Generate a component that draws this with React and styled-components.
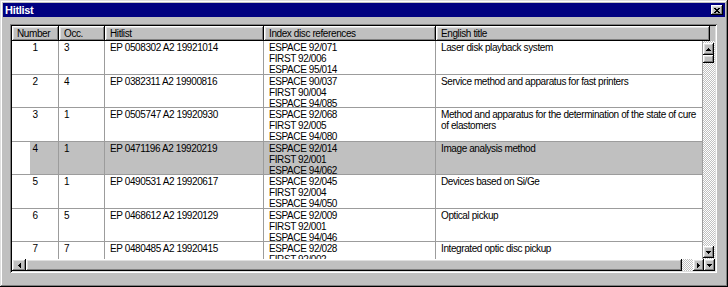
import React from "react";
import styled, { createGlobalStyle, css } from "styled-components";

const Global = createGlobalStyle`
  html, body { margin: 0; padding: 0; background: #c0c0c0; }
  body { font-family: "Liberation Sans", Arial, sans-serif; }
`;

const raised = css`
  background: #c0c0c0;
  box-shadow: inset -1px -1px #000, inset 1px 1px #fff, inset -2px -2px #808080, inset 2px 2px #dfdfdf;
`;

const dither = css`
  background: repeating-conic-gradient(#c0c0c0 0 25%, #fff 0 50%) 0 0 / 2px 2px;
`;

const Window = styled.div`
  width: 728px;
  height: 287px;
  box-sizing: border-box;
  padding: 3px;
  background: #c0c0c0;
  box-shadow: inset -1px -1px #000, inset 1px 1px #dfdfdf, inset -2px -2px #808080, inset 2px 2px #fff;
  display: flex;
  flex-direction: column;
  font-family: "Liberation Sans", Arial, sans-serif;
`;

const TitleBar = styled.div`
  height: 14px;
  background: #000080;
  display: flex;
  align-items: center;
  justify-content: space-between;
  padding: 0 2px;
  flex-shrink: 0;
`;

const Title = styled.span`
  color: #fff;
  font-weight: bold;
  font-size: 11px;
  line-height: 14px;
  letter-spacing: -0.3px;
`;

const CloseBtn = styled.div`
  ${raised};
  width: 12px;
  height: 10px;
  display: flex;
  align-items: center;
  justify-content: center;
`;

const Body = styled.div`
  flex: 1;
  display: flex;
  padding: 7px 8px 11px 7px;
  min-height: 0;
`;

const Frame = styled.div`
  flex: 1;
  display: flex;
  flex-direction: column;
  padding: 2px;
  background: #fff;
  box-shadow: inset 1px 1px #808080, inset -1px -1px #fff, inset 2px 2px #000, inset -2px -2px #dfdfdf;
  min-height: 0;
`;

const Header = styled.div`
  display: flex;
  height: 15px;
  flex-shrink: 0;
  background: #c0c0c0;
`;

const HeaderCell = styled.div`
  ${raised};
  width: ${(p) => p.$w}px;
  box-sizing: border-box;
  padding-left: 5px;
  font-size: 10px;
  line-height: 15px;
  letter-spacing: -0.4px;
  white-space: nowrap;
  color: #000;
`;

const HeaderFill = styled.div`
  flex: 1;
  background: #c0c0c0;
`;

const Middle = styled.div`
  flex: 1;
  display: flex;
  min-height: 0;
`;

const Rows = styled.div`
  width: 691px;
  overflow: hidden;
  background: #fff;
  display: flex;
  flex-direction: column;
`;

const Row = styled.div`
  display: flex;
  height: 33.5px;
  flex-shrink: 0;
  box-sizing: border-box;
  border-bottom: 1px solid #9c9c9c;
  background: ${(p) => (p.$selected ? "#c0c0c0" : "#fff")};
`;

const Cell = styled.div`
  width: ${(p) => p.$w}px;
  box-sizing: border-box;
  border-right: 1px solid #9c9c9c;
  padding: 1px 0 0 ${(p) => (p.$center ? 0 : 5)}px;
  text-align: ${(p) => (p.$center ? "center" : "left")};
  font-size: 10px;
  line-height: 11px;
  letter-spacing: -0.4px;
  white-space: nowrap;
  overflow: hidden;
  color: #000;
  ${(p) =>
    p.$cut &&
    css`
      background: linear-gradient(to right, #fff 18px, transparent 18px);
    `}
`;

const VScroll = styled.div`
  width: 12px;
  display: flex;
  flex-direction: column;
  ${dither};
  padding-top: 2px;
  padding-bottom: 1px;
  box-sizing: border-box;
`;

const ArrowBtn = styled.div`
  ${raised};
  width: ${(p) => (p.$w ? `${p.$w}px` : "11px")};
  height: ${(p) => (p.$h ? `${p.$h}px` : "12px")};
  flex-shrink: 0;
  display: flex;
  align-items: center;
  justify-content: center;
`;

const VThumb = styled.div`
  ${raised};
  width: 11px;
  height: 8px;
  flex-shrink: 0;
`;

const VTrack = styled.div`
  flex: 1;
`;

const HScroll = styled.div`
  display: flex;
  height: 12px;
  flex-shrink: 0;
  background: #c0c0c0;
`;

const HThumb = styled.div`
  ${raised};
  flex: 1;
`;

const HTrack = styled.div`
  width: 11px;
  ${dither};
`;

const Arrow = ({ dir }) => {
  const paths = {
    up: "M2 0h1v1H2z M1 1h3v1H1z M0 2h5v1H0z",
    down: "M0 0h5v1H0z M1 1h3v1H1z M2 2h1v1H2z",
    left: "M2 0h1v5H2z M1 1h1v3H1z M0 2h1v1H0z",
    right: "M0 0h1v5H0z M1 1h1v3H1z M2 2h1v1H2z",
  };
  const vertical = dir === "up" || dir === "down";
  const w = vertical ? 5 : 3;
  const h = vertical ? 3 : 5;
  return (
    <svg width={w} height={h} viewBox={`0 0 ${w} ${h}`} shapeRendering="crispEdges">
      <path d={paths[dir]} fill="#000" />
    </svg>
  );
};

const CloseGlyph = () => (
  <svg width="6" height="5" viewBox="0 0 6 5" shapeRendering="crispEdges">
    <path d="M0 0h2v1H0z M4 0h2v1H4z M1 1h4v1H1z M2 2h2v1H2z M1 3h4v1H1z M0 4h2v1H0z M4 4h2v1H4z" fill="#000" />
  </svg>
);

const columns = [
  { key: "num", label: "Number", w: 47, hw: 47 },
  { key: "occ", label: "Occ.", w: 46, hw: 46 },
  { key: "hit", label: "Hitlist", w: 159, hw: 159 },
  { key: "idx", label: "Index disc references", w: 172, hw: 172 },
  { key: "title", label: "English title", w: 267, hw: 274 },
];

const data = [
  { num: "1", occ: "3", hit: "EP 0508302 A2 19921014", idx: ["ESPACE 92/071", "FIRST 92/006", "ESPACE 95/014"], title: ["Laser disk playback system"] },
  { num: "2", occ: "4", hit: "EP 0382311 A2 19900816", idx: ["ESPACE 90/037", "FIRST 90/004", "ESPACE 94/085"], title: ["Service method and apparatus for fast printers"] },
  { num: "3", occ: "1", hit: "EP 0505747 A2 19920930", idx: ["ESPACE 92/068", "FIRST 92/005", "ESPACE 94/080"], title: ["Method and apparatus for the determination of the state of cure", "of elastomers"] },
  { num: "4", occ: "1", hit: "EP 0471196 A2 19920219", idx: ["ESPACE 92/014", "FIRST 92/001", "ESPACE 94/062"], title: ["Image analysis method"], selected: true },
  { num: "5", occ: "1", hit: "EP 0490531 A2 19920617", idx: ["ESPACE 92/045", "FIRST 92/004", "ESPACE 94/050"], title: ["Devices based on Si/Ge"] },
  { num: "6", occ: "5", hit: "EP 0468612 A2 19920129", idx: ["ESPACE 92/009", "FIRST 92/001", "ESPACE 94/046"], title: ["Optical pickup"] },
  { num: "7", occ: "7", hit: "EP 0480485 A2 19920415", idx: ["ESPACE 92/028", "FIRST 92/002", "ESPACE 94/051"], title: ["Integrated optic disc pickup"] },
];

const Lines = ({ lines }) =>
  lines.map((l, i) => <div key={i}>{l}</div>);

export default function App() {
  return (
    <>
      <Global />
      <Window>
        <TitleBar>
          <Title>Hitlist</Title>
          <CloseBtn>
            <CloseGlyph />
          </CloseBtn>
        </TitleBar>
        <Body>
          <Frame>
            <Header>
              {columns.map((c) => (
                <HeaderCell key={c.key} $w={c.hw}>
                  {c.label}
                </HeaderCell>
              ))}
              <HeaderFill />
            </Header>
            <Middle>
              <Rows>
                {data.map((r) => (
                  <Row key={r.num} $selected={r.selected}>
                    <Cell $w={47} $center $cut={r.selected}>{r.num}</Cell>
                    <Cell $w={46}>{r.occ}</Cell>
                    <Cell $w={159}>{r.hit}</Cell>
                    <Cell $w={172}>
                      <Lines lines={r.idx} />
                    </Cell>
                    <Cell $w={267}>
                      <Lines lines={r.title} />
                    </Cell>
                  </Row>
                ))}
              </Rows>
              <VScroll>
                <ArrowBtn $w={11}>
                  <Arrow dir="up" />
                </ArrowBtn>
                <VThumb />
                <VTrack />
                <ArrowBtn $w={11}>
                  <Arrow dir="down" />
                </ArrowBtn>
              </VScroll>
            </Middle>
            <HScroll>
              <ArrowBtn $w={14}>
                <Arrow dir="left" />
              </ArrowBtn>
              <HThumb />
              <HTrack />
              <ArrowBtn $w={11}>
                <Arrow dir="right" />
              </ArrowBtn>
              <ArrowBtn $w={11}>
                <Arrow dir="down" />
              </ArrowBtn>
            </HScroll>
          </Frame>
        </Body>
      </Window>
    </>
  );
}
